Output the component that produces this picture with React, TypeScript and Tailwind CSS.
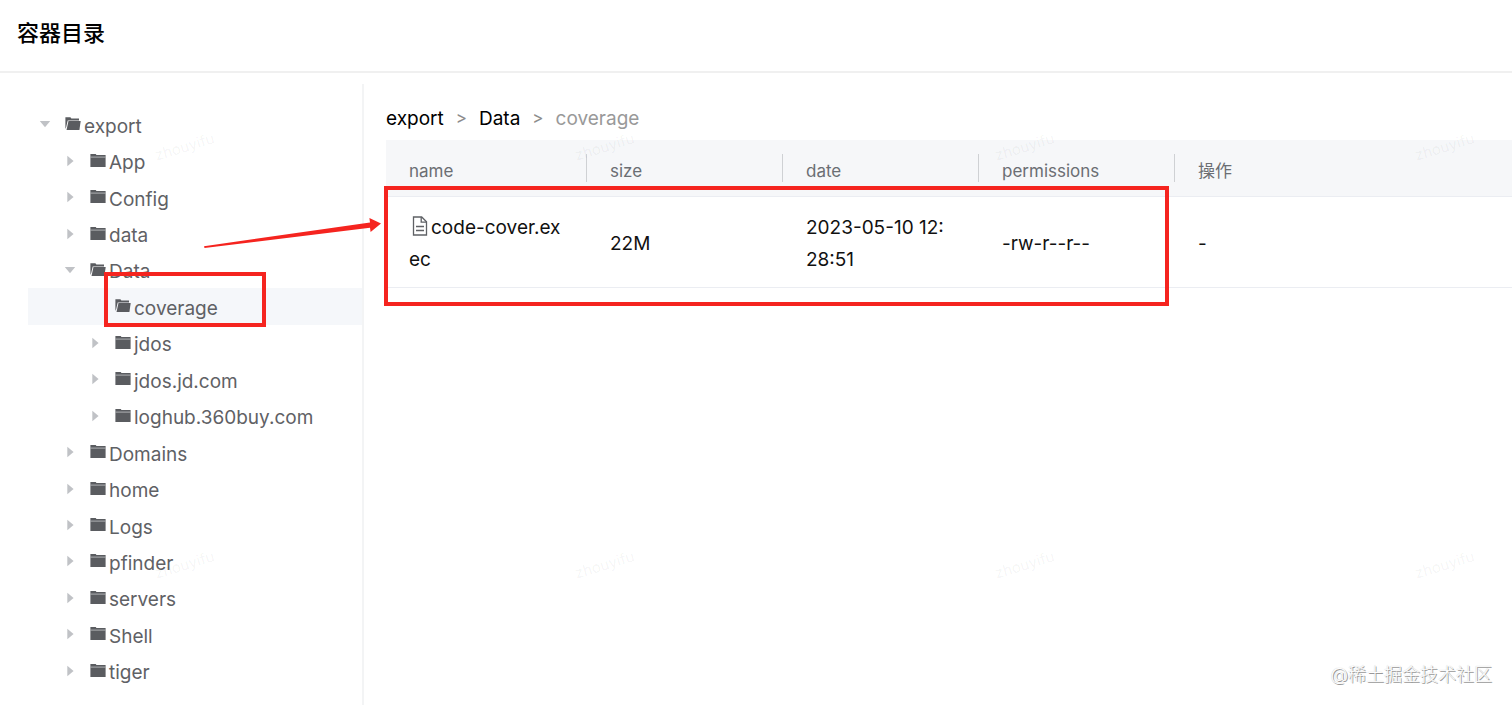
import { FC, useState } from "react"
import clsx from "clsx"

type TreeItem = {
  key: string
  label: string
  level: number
  open?: boolean
  leaf?: boolean
}

type FileItem = {
  name: string
  size: string
  date: string
  permissions: string
}

const tree: TreeItem[] = [
  { key: "export", label: "export", level: 0, open: true },
  { key: "App", label: "App", level: 1 },
  { key: "Config", label: "Config", level: 1 },
  { key: "data-lower", label: "data", level: 1 },
  { key: "Data", label: "Data", level: 1, open: true },
  { key: "coverage", label: "coverage", level: 2, open: true, leaf: true },
  { key: "jdos", label: "jdos", level: 2 },
  { key: "jdos.jd.com", label: "jdos.jd.com", level: 2 },
  { key: "loghub", label: "loghub.360buy.com", level: 2 },
  { key: "Domains", label: "Domains", level: 1 },
  { key: "home", label: "home", level: 1 },
  { key: "Logs", label: "Logs", level: 1 },
  { key: "pfinder", label: "pfinder", level: 1 },
  { key: "servers", label: "servers", level: 1 },
  { key: "Shell", label: "Shell", level: 1 },
  { key: "tiger", label: "tiger", level: 1 }
]

const columns = ["name", "size", "date", "permissions", "操作"]

const files: FileItem[] = [
  { name: "code-cover.exec", size: "22M", date: "2023-05-10 12:28:51", permissions: "-rw-r--r--" }
]

const indents = ["pl-[11px]", "pl-[36px]", "pl-[61px]"]

const Caret: FC<{ open?: boolean }> = ({ open }) => (
  <svg className="size-3 shrink-0" viewBox="0 0 12 12" fill="#c0c2c6" aria-hidden="true">
    {open ? <path d="M.8 3h10.400L6 9.300z" /> : <path d="M3.300.8v10.400L9.600 6z" />}
  </svg>
)

const FolderIcon: FC<{ open?: boolean }> = ({ open }) => (
  <svg className="h-4 w-4 shrink-0" viewBox="0 0 16 16" fill="#5a5c60" aria-hidden="true">
    {open ? (
      <>
        <path d="M.4 1.200h5l1 1.300h7.600v1.900H2.700L1.200 11 .4 13z" />
        <path d="M3.500 4.900h12.200l-1.300 9H1.500z" />
      </>
    ) : (
      <>
        <path d="M.4.9h5.300l.8 1.200h9.100v12H.4z" />
        <path d="M.4 4.100h15.200" stroke="#c4c6c9" strokeWidth=".8" />
      </>
    )}
  </svg>
)

const FileIcon: FC = () => (
  <svg
    className="mr-[3px] ml-[3px] inline-block h-5 w-4 align-[-2px]"
    viewBox="0 0 16 20"
    fill="none"
    stroke="#5f6165"
    strokeWidth="1.3"
    aria-hidden="true"
  >
    <path d="M1.5 1h8.2l4.800 4.800V19h-13z" />
    <path d="M9.200 1v5.200h5.300M4 10.500h8M4 14.500h8" />
  </svg>
)

const Tree: FC = () => {
  const [current, setCurrent] = useState("coverage")

  return (
    <nav className="w-[364px] shrink-0 border-r-2 border-[#f3f4f5] pt-[22px] pb-4 pl-7">
      <ul className="grid h-full auto-rows-[minmax(36px,1fr)]">
        {tree.map((item) => (
          <li key={item.key}>
            <button
              type="button"
              onClick={() => setCurrent(item.key)}
              className={clsx(
                "flex h-full w-full items-center text-left",
                indents[item.level],
                current === item.key && "bg-[#f5f7fa]"
              )}
            >
              {item.leaf ? <span className="w-3 shrink-0" /> : <Caret open={item.open} />}
              <span className="ml-[14px] flex items-center gap-[3px]">
                <FolderIcon open={item.open} />
                <span className="pt-[5px] leading-6">{item.label}</span>
              </span>
            </button>
          </li>
        ))}
      </ul>
    </nav>
  )
}

const Breadcrumb: FC = () => (
  <nav className="flex h-7 items-center gap-3 pt-0.5 text-black">
    <a href="#export">export</a>
    <span className="text-[17px] text-[#8c8c8c]">&gt;</span>
    <a href="#data">Data</a>
    <span className="text-[17px] text-[#8c8c8c]">&gt;</span>
    <span className="text-[#999]">coverage</span>
  </nav>
)

const FileTable: FC = () => (
  <table className="mt-2 w-full table-fixed border-collapse text-left">
    <colgroup>
      <col className="w-[201px]" />
      <col className="w-[196px]" />
      <col className="w-[196px]" />
      <col className="w-[196px]" />
      <col />
    </colgroup>
    <thead className="bg-[#f6f7f9] text-[17px] text-[#6b6e73]">
      <tr className="border-b border-[#ebedf2]">
        {columns.map((item, i) => (
          <th key={item} className="py-[14px] font-normal">
            <div
              className={clsx(
                "flex h-7 items-center pt-[7px] pl-[23px]",
                i < columns.length - 1 && "border-r border-[#cfd1d4]"
              )}
            >
              {item}
            </div>
          </th>
        ))}
      </tr>
    </thead>
    <tbody className="leading-8 text-[#111]">
      {files.map((item) => (
        <tr
          key={item.name}
          className="border-b border-[#ebedf2] *:pt-[15px] *:pr-[26px] *:pb-[11px] *:pl-[23px] *:break-all"
        >
          <td>
            <FileIcon />
            {item.name}
          </td>
          <td>{item.size}</td>
          <td>{item.date}</td>
          <td>{item.permissions}</td>
          <td>-</td>
        </tr>
      ))}
    </tbody>
  </table>
)

// faint user name repeated over the whole page
const UserMarks: FC = () => (
  <div className="pointer-events-none absolute inset-0 overflow-hidden text-[15px] text-black/5">
    {[136, 554].map((top) =>
      [154, 574, 994, 1414].map((left) => (
        <span key={`${top}-${left}`} className="absolute -rotate-[17deg]" style={{ top, left }}>
          zhouyifu
        </span>
      ))
    )}
  </div>
)

const Highlights: FC = () => (
  <div className="pointer-events-none absolute inset-0 overflow-hidden">
    <div className="absolute top-[272px] left-[104px] h-[55px] w-[162px] border-4 border-[#f5241f]" />
    <div className="absolute top-[186px] left-[384px] h-[120px] w-[785px] border-4 border-[#f5241f]" />
    <svg className="absolute top-[215px] left-[200px] h-9 w-[184px]" viewBox="0 0 184 36" fill="#f5241f">
      <path d="M4 31.200 170 7.400 169.400 3 181 8.600 170.600 17 170 12.800 4.500 33z" />
    </svg>
  </div>
)

const App: FC = () => {
  return (
    <div className="relative flex min-h-screen flex-col bg-white font-[Inter,'Noto_Sans_CJK_SC',sans-serif] text-[19px] text-[#5f6165]">
      <header className="border-b-2 border-[#f0f0f0] px-[17px] pt-[17px] pb-[22px]">
        <h1 className="text-[22px] leading-8 font-medium text-black">容器目录</h1>
      </header>
      <div className="flex flex-1 pt-[11px]">
        <Tree />
        <main className="min-w-0 flex-1 pt-5 pl-[22px]">
          <Breadcrumb />
          <FileTable />
        </main>
      </div>
      <UserMarks />
      <Highlights />
      <p className="absolute right-5 bottom-4 text-lg leading-7 font-light text-white [text-shadow:1px_1px_0_#999,0_0_1px_#bbb]">
        @稀土掘金技术社区
      </p>
    </div>
  )
}

export default App
